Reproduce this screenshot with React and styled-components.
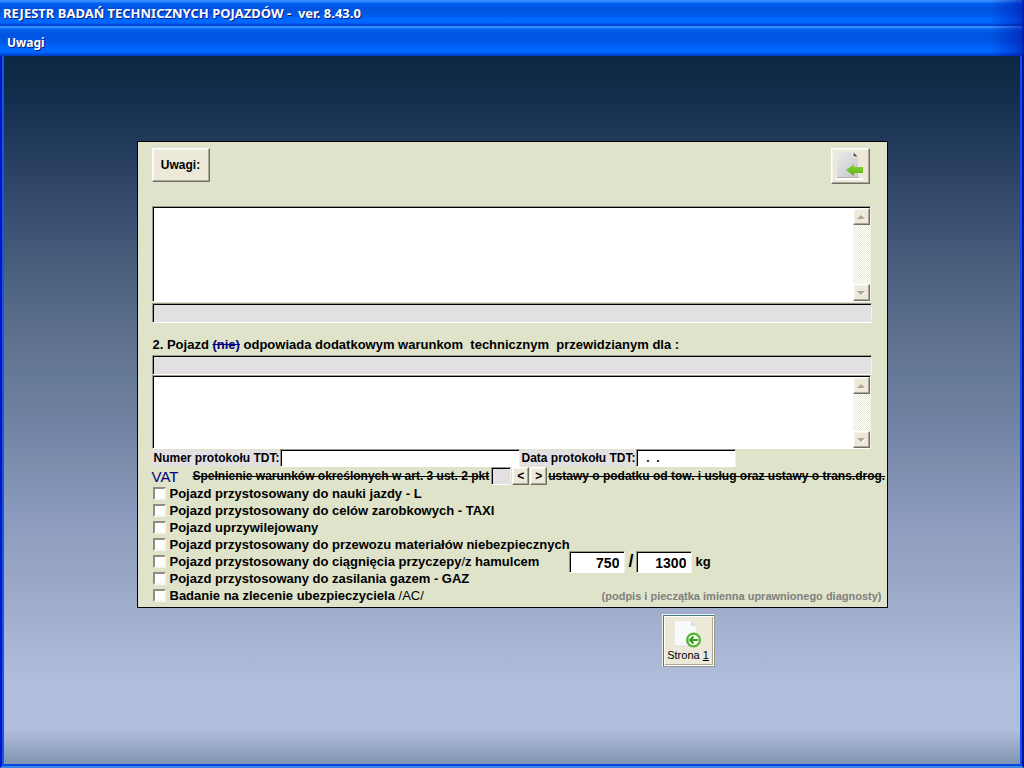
import React, { useState } from 'react';
import styled, { createGlobalStyle } from 'styled-components';

const GlobalStyle = createGlobalStyle`
    * { box-sizing: border-box; }

    body {
        margin: 0;
        font-family: "Liberation Sans", Arial, sans-serif;
        font-size: 12px;
        color: #000;
    }

    button, input, textarea { font-family: inherit; }
`;

const Window = styled.div`
    display: flex;
    flex-direction: column;
    min-height: 100vh;
    background: #0a4ce0;
`;

const TitleBar = styled.header`
    display: flex;
    align-items: center;
    height: ${({ $inner }) => ($inner ? 30 : 26)}px;
    padding: ${({ $inner }) => ($inner ? '4px 7px 0' : '0 3px')};
    background:
        linear-gradient(to right, transparent calc(100% - 34px), rgba(0, 20, 170, 0.55) calc(100% - 3px), #0018a0),
        linear-gradient(to bottom, #3b94ff 0, #2c84ff 2px, #0062f0 3px, #0054e0 8px, #0056e6 50%, #0068ff 75%, #0066ff 88%, #0048d8 94%, #0040cc 100%);

    h1, h2 {
        margin: 0;
        font-family: "Noto Sans", sans-serif;
        font-size: ${({ $inner }) => ($inner ? 12 : 13)}px;
        font-weight: bold;
        line-height: 16px;
        white-space: pre;
        color: #fff;
        text-shadow: 1px 1px 0 #0a1a80;
    }
`;

const Desktop = styled.main`
    flex: 1;
    display: flex;
    flex-direction: column;
    align-items: center;
    gap: 6px;
    padding: 85px 16px 16px;
    border: 2px solid;
    border-top: 0;
    border-color: #0014c4 #00109c #3a86e0 #0014c4;
    box-shadow: inset 2px 0 0 #0b58ec, inset -2px 0 0 #0b50ec, inset 0 -2px 0 #0048e8;
    background: linear-gradient(to bottom, #0c2844 0%, #0f2b48 4%, #21395a 12%, #344a6a 20%, #465a7a 28%, #5e7290 40%, #6d80a0 50%, #8c9bbd 65%, #a0adcc 78%, #b0bddb 88%, #b0bddb 95%, #7b92ae 100%);
`;

const Panel = styled.form`
    width: 100%;
    max-width: 751px;
    padding: 6px 0 3px 14px;
    border: 1px solid #000;
    background: #dee3ca;
`;

const PanelHead = styled.div`
    display: flex;
    justify-content: space-between;
    align-items: flex-start;
    padding-right: 17px;
    margin-bottom: 22px;
`;

const Button = styled.button`
    display: flex;
    align-items: center;
    justify-content: center;
    padding: 0;
    width: ${({ $width }) => $width}px;
    height: ${({ $height }) => $height}px;
    border: 1px solid;
    border-color: #fff #716f64 #716f64 #fff;
    box-shadow: inset -1px -1px 0 #aca899, inset 1px 1px 0 #f6f4ec;
    background: #ece9d8;
    font-size: 12px;
    font-weight: bold;
    color: #000;
`;

const Sunken = styled.div`
    display: flex;
    height: ${({ $height }) => $height}px;
    margin-right: 16px;
    padding: 1px 0 0 1px;
    border: 1px solid;
    border-color: #9a9788 #f4f2e6 #fff #9a9788;
    box-shadow: inset 1px 1px 0 #000;
    background: #fff;
`;

const Memo = styled.textarea`
    flex: 1;
    min-width: 0;
    padding: 2px 4px;
    border: 0;
    outline: 0;
    resize: none;
    background: #fff;
    font-size: 13px;
`;

const ScrollTrack = styled.div`
    display: flex;
    flex-direction: column;
    justify-content: space-between;
    width: 17px;
    background: repeating-conic-gradient(#fff 0 25%, #ece9d8 0 50%) 0 0 / 2px 2px;
`;

const Field = styled.input`
    width: ${({ $width }) => ($width ? `${$width}px` : '100%')};
    height: ${({ $height }) => $height || 20}px;
    padding: 0 3px;
    border: 1px solid;
    border-color: #9a9788 #f4f2e6 #fff #9a9788;
    outline: 0;
    box-shadow: inset 1px 1px 0 #000;
    background: ${({ $grey }) => ($grey ? '#e3e0e3' : '#fff')};
    font-size: ${({ $big }) => ($big ? 14 : 12)}px;
    font-weight: bold;
    text-align: ${({ $big }) => ($big ? 'right' : 'left')};
    white-space: pre;
`;

const WeightField = styled(Field)`
    padding: 2px 5px 0 3px;
`;

const Bar = styled.div`
    display: flex;
    margin: ${({ $top }) => $top || 0}px 15px 0 0;
`;

const Question = styled.p`
    margin: 14px 0 2px;
    padding-left: 1px;
    font-size: 13px;
    font-weight: bold;
    line-height: 16px;
    white-space: pre-wrap;

    del { color: #000080; }
`;

const ProtocolRow = styled.div`
    display: flex;
    align-items: center;
    height: 18px;

    label {
        padding: 0 0 0 2px;
        background: #e3e0e3;
        font-weight: bold;
        line-height: 16px;
    }
`;

const VatRow = styled.div`
    display: flex;
    align-items: center;
    height: 18px;
    white-space: nowrap;

    strong {
        width: 41px;
        font-size: 15px;
        font-weight: normal;
        color: #000080;
    }

    del {
        font-size: 12px;
        font-weight: bold;
    }
`;

const VatSteps = styled.div`
    display: flex;
    gap: 1px;
    margin: 0 1px 0 2px;
`;

const Options = styled.div`
    display: grid;
    grid-auto-rows: 17px;
`;

const Option = styled.div`
    display: flex;
    align-items: center;
    font-size: 13px;
    font-weight: bold;

    > label {
        display: flex;
        align-items: center;
        gap: 4px;
    }
`;

const Light = styled.span`
    font-weight: normal;
`;

const Checkbox = styled.input`
    appearance: none;
    width: 13px;
    height: 13px;
    margin: 0 0 0 1px;
    border: 2px solid;
    border-color: #8f8c80 #f6f4ec #f6f4ec #8f8c80;
    background: #fff;

    &:checked { background: #333; }
`;

const Weights = styled.div`
    display: flex;
    align-items: center;
    gap: 3px;
    margin-left: 30px;
`;

const Slash = styled.span`
    font-size: 18px;
    line-height: 17px;
`;

const Signature = styled.span`
    margin-left: auto;
    padding-right: 5px;
    font-size: 11px;
    color: #808080;
`;

const Footer = styled.div`
    display: flex;
    justify-content: flex-end;
    width: 100%;
    max-width: 751px;
    padding-right: 173px;
`;

const PageButton = styled(Button)`
    flex-direction: column;
    padding-bottom: 2px;
    border-color: #f4f2e6 #9a9788 #9a9788 #f4f2e6;
    box-shadow: inset 1px 1px 0 #3c7f8c, inset 2px 2px 0 #fff, inset -1px -1px 0 #fff, inset -2px -2px 0 #aca899;
    font-size: 11px;
    font-weight: normal;
`;

const ExitIcon = () => (
    <svg width="30" height="30" viewBox="0 0 30 30" aria-hidden="true">
        <defs>
            <linearGradient id="sheet" x1="0" y1="0" x2="1" y2="1">
                <stop offset="0" stopColor="#ececec" />
                <stop offset="0.6" stopColor="#d4d4d8" />
                <stop offset="1" stopColor="#c6c6ca" />
            </linearGradient>
            <linearGradient id="arrow" x1="0" y1="0" x2="0" y2="1">
                <stop offset="0" stopColor="#8cd83c" />
                <stop offset="1" stopColor="#58b010" />
            </linearGradient>
        </defs>
        <path d="M2 1H18L23 6V27H2Z" fill="url(#sheet)" />
        <path d="M1 28H28" stroke="#fff" strokeWidth="2" />
        <path d="M2 26.500H24" stroke="#b4b4b6" />
        <path d="M18 1L23 6H18Z" fill="#4c4c50" />
        <path d="M18 1V6H23" fill="none" stroke="#fff" />
        <path d="M11 19L19 13V16H28V22H19V25Z" fill="url(#arrow)" />
    </svg>
);

const PageIcon = () => (
    <svg width="28" height="30" viewBox="0 0 28 30" aria-hidden="true">
        <path d="M1 2H17L22 7V27H1Z" fill="#f7f9fb" />
        <path d="M17 2L22 7H17Z" fill="#d5dae2" />
        <path d="M1 27H20" stroke="#dde1e4" />
        <circle cx="19.500" cy="21" r="7.500" fill="#52b430" />
        <circle cx="19.500" cy="21" r="5.200" fill="#fff" />
        <path d="M24 21H17M19.500 17.500L16 21L19.500 24.500" fill="none" stroke="#389c20" strokeWidth="2.200" />
    </svg>
);

const Triangle = ({ down }) => (
    <svg width="9" height="6" viewBox="0 0 9 6" aria-hidden="true">
        <path d={down ? 'M2 2H9L5.500 5.500Z' : 'M2 6H9V5Z'} fill="#fff" />
        <path d={down ? 'M0 1H8L4 5Z' : 'M0 5H8L4 1Z'} fill="#aca899" />
    </svg>
);

const MemoBox = ({ label, height }) => (
    <Sunken $height={height}>
        <Memo aria-label={label} />
        <ScrollTrack>
            <Button type="button" $width={17} $height={17} aria-label="W górę"><Triangle /></Button>
            <Button type="button" $width={17} $height={17} aria-label="W dół"><Triangle down /></Button>
        </ScrollTrack>
    </Sunken>
);

const options = [
    { id: 'nauka', text: 'Pojazd przystosowany do nauki jazdy - L' },
    { id: 'taxi', text: 'Pojazd przystosowany do celów zarobkowych - TAXI' },
    { id: 'uprz', text: 'Pojazd uprzywilejowany' },
    { id: 'niebezp', text: 'Pojazd przystosowany do przewozu materiałów niebezpiecznych' },
    { id: 'hak', text: <>Pojazd przystosowany do ciągnięcia przyczepy<Light>/</Light>z hamulcem</>, weights: true },
    { id: 'gaz', text: 'Pojazd przystosowany do zasilania gazem - GAZ' },
    { id: 'ac', text: <>Badanie na zlecenie ubezpieczyciela <Light>/AC/</Light></>, signature: true },
];

const App = () => {
    const [checked, setChecked] = useState({});

    const toggle = (id) => setChecked({ ...checked, [id]: !checked[id] });

    return (
        <Window>
            <GlobalStyle />
            <TitleBar><h1>REJESTR BADAŃ TECHNICZNYCH POJAZDÓW -  ver. 8.43.0</h1></TitleBar>
            <TitleBar $inner><h2>Uwagi</h2></TitleBar>
            <Desktop>
                <Panel>
                    <PanelHead>
                        <Button type="button" $width={58} $height={34}>Uwagi:</Button>
                        <Button type="button" $width={39} $height={36} aria-label="Wyjście"><ExitIcon /></Button>
                    </PanelHead>
                    <MemoBox label="Uwagi" height={96} />
                    <Bar $top={1}><Field $grey aria-label="Uwagi, wiersz" /></Bar>
                    <Question>2. Pojazd <del>(nie)</del> odpowiada dodatkowym warunkom  technicznym  przewidzianym dla :</Question>
                    <Bar><Field $grey aria-label="Warunki, wiersz" /></Bar>
                    <MemoBox label="Warunki dodatkowe" height={74} />
                    <ProtocolRow>
                        <label htmlFor="numer">Numer protokołu TDT:</label>
                        <Field id="numer" $width={240} $height={18} />
                        <label htmlFor="data">Data protokołu TDT:</label>
                        <Field id="data" $width={100} $height={18} defaultValue="  .  ." />
                    </ProtocolRow>
                    <VatRow>
                        <strong>VAT</strong>
                        <del>Spełnienie warunków określonych w art. 3 ust. 2 pkt </del>
                        <VatSteps>
                            <Field $grey $width={20} $height={18} aria-label="Punkt" />
                            <Button type="button" $width={17} $height={18}>&lt;</Button>
                            <Button type="button" $width={17} $height={18}>&gt;</Button>
                        </VatSteps>
                        <del>ustawy o podatku od tow. i usług oraz ustawy o trans.drog.</del>
                    </VatRow>
                    <Options>
                        {options.map(({ id, text, weights, signature }) => (
                            <Option key={id}>
                                <label>
                                    <Checkbox type="checkbox" checked={!!checked[id]} onChange={() => toggle(id)} />
                                    <span>{text}</span>
                                </label>
                                {weights && (
                                    <Weights>
                                        <WeightField $big $width={56} $height={22} aria-label="Bez hamulca" defaultValue="750" />
                                        <Slash>/</Slash>
                                        <WeightField $big $width={56} $height={22} aria-label="Z hamulcem" defaultValue="1300" />
                                        <span>kg</span>
                                    </Weights>
                                )}
                                {signature && <Signature>(podpis i pieczątka imienna uprawnionego diagnosty)</Signature>}
                            </Option>
                        ))}
                    </Options>
                </Panel>
                <Footer>
                    <PageButton type="button" $width={53} $height={53}>
                        <PageIcon />
                        <span>Strona <u>1</u></span>
                    </PageButton>
                </Footer>
            </Desktop>
        </Window>
    );
};

export default App;
